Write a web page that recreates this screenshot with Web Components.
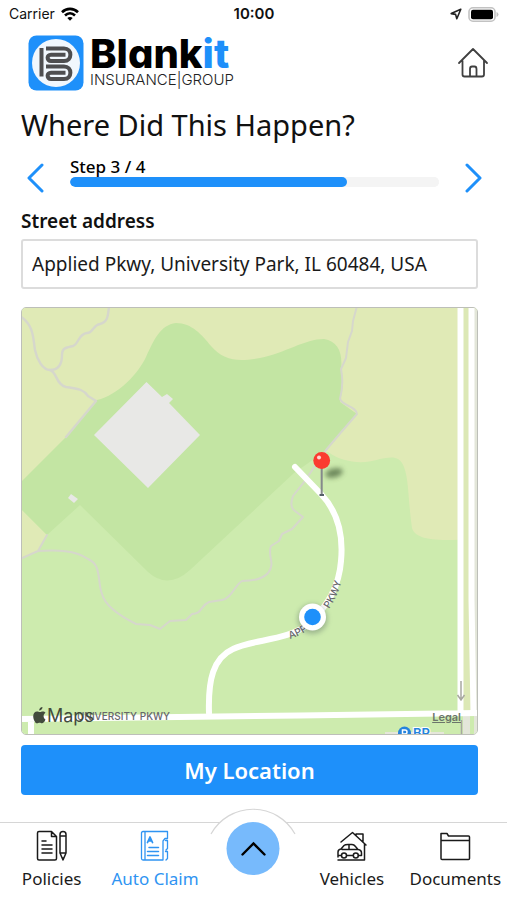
<!DOCTYPE html>
<html lang="en">
<head>
<meta charset="utf-8">
<meta name="viewport" content="width=device-width, initial-scale=1">
<title>Where Did This Happen?</title>
<style>
  html, body { margin: 0; }
  body {
    --blue: #1e90fa;
    --line: #d2d2d2;
    --ink: #111;
    font-family: "Noto Sans", "Open Sans", sans-serif;
    color: var(--ink);
    background: #fff;
  }
</style>
</head>
<body>
<claim-app></claim-app>
<script>
const define = (name, html, setup) => {
  const tpl = document.createElement('template');
  tpl.innerHTML = '<style>*{box-sizing:border-box}svg{display:block}</style>' + html;
  customElements.define(name, class extends HTMLElement {
    constructor() {
      super();
      this.attachShadow({ mode: 'open' }).append(tpl.content.cloneNode(true));
    }
    connectedCallback() { if (setup) setup(this, this.shadowRoot); }
  });
};

define('status-bar', `
<style>
  :host { display: grid; grid-template-columns: 1fr auto 1fr; align-items: center; height: 28px; padding: 0 8px 0 9px;
    font: 14px/20px Inter, "Liberation Sans", sans-serif; }
  .side { display: flex; align-items: center; gap: 6px; }
  .end { justify-content: flex-end; }
  .time { font-size: 15px; font-weight: 600; }
</style>
<div class="side"><span>Carrier</span>
  <svg width="18" height="14" viewBox="0 0 18 14" fill="none" stroke="#000" stroke-width="2.6" aria-label="Wi-Fi">
    <path d="M1 5.2C5.500 .8 12.500 .8 17 5.200M4 8.500C7 5.600 11 5.600 14 8.500"/><path d="M9 13.800 6.300 11C7.800 9.700 10.200 9.700 11.700 11Z" fill="#000" stroke="none"/>
  </svg></div>
<span class="time">10:00</span>
<div class="side end">
  <svg width="12" height="12" viewBox="0 0 12 12" fill="none" stroke="#222" stroke-width="1.600" stroke-linejoin="round" aria-label="Location"><path d="M10.800 1.200 1.200 5.600 5.600 6.400 6.800 10.800Z"/></svg>
  <svg width="31" height="15" viewBox="0 0 31 15" aria-label="Battery"><rect x="1" y=".8" width="26" height="13.400" rx="4" fill="#fff" stroke="#c2c2c2" stroke-width="1.600"/><rect x="3" y="2.800" width="22" height="9.400" rx="2"/><path d="M28.500 5v5q2-.8 2-2.500T28.500 5Z" fill="#c2c2c2"/></svg>
</div>`);

define('brand-logo', `
<style>
  :host { display: flex; align-items: center; gap: 6px; }
  .words { display: flex; flex-direction: column; }
  .name { font: 800 40px/34px Inter, sans-serif; font-feature-settings: "cv11"; color: #000; }
  .name b { font-weight: inherit; color: var(--blue); }
  .sub { font: 300 15px/18px Inter, sans-serif; color: #222; white-space: nowrap; }
</style>
<svg width="56" height="56" viewBox="0 0 56 56" aria-hidden="true">
  <rect x=".5" y=".5" width="55" height="55" rx="8" fill="#1e90fa"/>
  <circle cx="28" cy="28" r="24" fill="#f1f7fd"/>
  <g fill="none" stroke="#4e4e50" stroke-width="4">
    <path d="M13.500 13V41.500"/>
    <path d="M18 13.500H36C44.500 13.500 44.500 26 36 26H23C18.500 26 18.500 19.700 23 19.700H37.500"/>
    <path d="M18 31.500H36C44.500 31.500 44.500 44 36 44H23C18.500 44 18.500 37.700 23 37.700H37.500"/>
  </g>
</svg>
<div class="words"><span class="name">Blank<b>it</b></span><span class="sub">INSURANCE|GROUP</span></div>`);

define('app-header', `
<style>
  :host { display: flex; justify-content: space-between; align-items: center; padding: 7px 18px 0 28px; }
  button { border: 0; background: none; padding: 0; }
</style>
<brand-logo></brand-logo>
<button type="button" aria-label="Home"><svg width="32" height="32" viewBox="0 0 32 32" fill="none" stroke="#404040" stroke-width="1.800" stroke-linejoin="round" stroke-linecap="round"><path d="M2 16 16 2 30 16M5.500 13.500V27.500Q5.500 29.500 7.500 29.500H25Q27 29.500 27 27.500V13.500M13 29V22Q13 19.500 15 19.500H17.500Q19.500 19.500 19.500 22V29"/></svg></button>`);

define('step-progress', `
<style>
  :host { display: flex; align-items: center; gap: 24px; padding-left: 5px; }
  .mid { flex: 1; min-width: 0; display: flex; flex-direction: column; }
  label { font-size: 17px; line-height: 20px; font-weight: 500; color: #000; }
  progress { appearance: none; display: block; width: 100%; height: 10px; border: 0; border-radius: 5px; background: #f4f4f4; overflow: hidden; }
  progress::-webkit-progress-bar { background: #f4f4f4; border-radius: 5px; }
  progress::-webkit-progress-value { background: var(--blue); border-radius: 5px; }
  progress::-moz-progress-bar { background: var(--blue); border-radius: 5px; }
  button { border: 0; background: none; padding: 0; margin-top: 12px; }
  .next { margin-right: -5px; }
</style>
<button type="button" aria-label="Previous step"><svg width="20" height="30" viewBox="0 0 20 30" fill="none" stroke="#1e90fa" stroke-width="3" stroke-linecap="round" stroke-linejoin="round"><path d="M16 2 3 15 16 28"/></svg></button>
<div class="mid"><label for="p"></label><progress id="p"></progress></div>
<button class="next" type="button" aria-label="Next step"><svg width="20" height="30" viewBox="0 0 20 30" fill="none" stroke="#1e90fa" stroke-width="3" stroke-linecap="round" stroke-linejoin="round"><path d="M4 2 17 15 4 28"/></svg></button>`,
(el, root) => {
  const step = el.getAttribute('step'), total = el.getAttribute('total');
  root.querySelector('label').textContent = 'Step ' + step + ' / ' + total;
  root.querySelector('progress').max = total;
  root.querySelector('progress').value = step;
});

define('text-field', `
<style>
  :host { display: flex; flex-direction: column; gap: 4px; }
  label { font-size: 19px; line-height: 28px; font-weight: 600; color: #111; }
  input { width: 100%; height: 50px; padding: 0 9px; border: 2px solid #dcdcdc; border-radius: 3px; font: inherit; font-size: 19px; color: #1a1a1a; background: #fff; outline: 0; }
</style>
<label for="f"></label><input id="f" type="text">`,
(el, root) => {
  root.querySelector('label').textContent = el.getAttribute('label');
  root.querySelector('input').value = el.getAttribute('value');
});

define('location-map', `
<style>
  :host { display: block; position: relative; aspect-ratio: 457 / 428; border: 1px solid #bdbfb9; border-radius: 5px; overflow: hidden; }
  svg { width: 100%; height: 100%; }
  a { position: absolute; right: 16px; bottom: 10px; font: 600 11px/14px Inter, sans-serif; color: #6b756a; text-decoration: underline; }
  .road { font: 500 10px Inter, sans-serif; fill: #66666b; }
</style>
<svg viewBox="22 308 455 426" preserveAspectRatio="xMidYMid slice" role="img" aria-label="Map of Applied Pkwy">
  <defs>
    <filter id="soft" x="-60%" y="-100%" width="220%" height="300%"><feGaussianBlur stdDeviation="2.500"/></filter>
    <path id="pkwy" d="M290 639C326 627 346 590 345 552"/>
  </defs>
  <rect x="20" y="306" width="460" height="430" fill="#cdebae"/>
  <path fill="#e0eab6" d="M20 306H470V539C430 542 415 538 412 528C408 500 409 480 404 467C400 455 390 457 380 459C365 464 345 464 328 452L20 484ZM20 508 47 535 38 551 20 558Z"/>
  <path fill="#c3e5a3" d="M20 483 66 437 97 400C118 395 138 374 146 357C154 340 160 325 176 323C192 323 202 335 211 346C224 361 238 362 260 358C285 353 305 339 324 339C338 341 343 353 341 370L343 385 340 402 357 414 327 450 294 473 190 570Q168 590 148 572L80 505 47 535 20 508Z"/>
  <g fill="#e8e8e6"><path d="M146.500 382 162 397 167 394 173 399 169 403 200 435 148 488 94 435Z"/><path d="M71 494 78 499 74 503 68 498Z"/></g>
  <g fill="none" stroke="#d6d7cc" stroke-width="2.400" stroke-linejoin="round" stroke-linecap="round">
    <path d="M20 316C34 325 33 338 35 350C37 360 43 370 50 370C57 372 56 385 66 387C80 389 84 390 88 396L96 401 66 437"/>
    <path d="M109 306C108 318 107 322 100 324C93 325 93 333 87 333C78 334 79 344 73 346C65 348 62 348 62 355C62 365 58 370 50 370"/>
    <path stroke-width="2" d="M357 306 353 321 352 331 348 342 346 358 341 369Q344 384 340 399C344 407 356 406 357 414Q342 431 326 450L304 482 293 496Q289 507 295 511L303 517 292 529 282 534 279 541 271 546C267 556 276 563 268 573C262 580 250 581 242 581C235 585 231 599 222 600L209 602C200 606 202 614 192 614L186 620 170 621 160 629 150 625 136 624C122 617 105 606 102 594C97 581 102 565 88 559C75 550 57 550 38 551L20 559M38 551 47 535"/>
  </g>
  <path fill="none" stroke="#dce8b5" stroke-width="18" d="M468 306V712"/>
  <path fill="#e3e6d9" d="M474 306H478V736H474ZM463 716H470V736H463Z"/>
  <g fill="none" stroke="#fff" stroke-width="6">
    <path d="M460.500 306V714M471.500 306V600L473.500 714M20 719C120 718 330 715 477 713M31 719V736"/>
    <path stroke-linecap="round" d="M295 467 321 494C340 514 343 540 341 561C339 589 324 610 308 624C288 641 253 639 233 649C213 658 208 680 209 713"/>
  </g>
  <path fill="none" stroke="#a7a7a0" stroke-width="1.500" d="M461 681V699M457.500 695 461 700 464.500 695M461.500 720V736"/>
  <text class="road" x="170" y="720" text-anchor="end">UNIVERSITY PKWY</text>
  <text class="road"><textPath href="#pkwy">APPLIED</textPath></text>
  <text class="road"><textPath href="#pkwy" startOffset="50">PKWY</textPath></text>
  <g fill="#424b3c">
    <path d="M42.500 707C42.500 709 41 710.500 39.200 710.500C39 708.600 40.700 707 42.500 707ZM45.500 719.500C44.500 722 43.200 723.300 42 723.300C41 723.300 40.700 722.700 39.600 722.700C38.500 722.700 38.100 723.300 37.100 723.300C35 723.300 33.200 719 33.200 716.200C33.200 713.200 35 711.400 37 711.400C38.200 711.400 38.900 712.100 39.900 712.100C40.900 712.100 41.500 711.400 42.900 711.400C43.900 711.400 44.900 711.900 45.500 712.800C42.800 714.400 43.200 718.300 45.500 719.500Z"/>
    <text x="47" y="722" font-family="Inter, sans-serif" font-size="18">Maps</text>
  </g>
  <path fill="#e5e6da" d="M385 732H444V736H385Z"/>
  <circle cx="404.500" cy="733" r="6.500" fill="#2583dd"/>
  <path fill="none" stroke="#fff" stroke-width="1.500" d="M402.500 737V730H405Q407 730 407 732T405 734H402.500"/>
  <text x="413" y="738" font-family="Inter, sans-serif" font-size="13" font-weight="600" fill="#2583dd" stroke="#fff" stroke-width="2" paint-order="stroke">BP</text>
  <circle cx="312.500" cy="619" r="15" fill="#455" opacity=".35" filter="url(#soft)"/>
  <circle cx="312.500" cy="617" r="13.500" fill="#fff"/><circle cx="312.500" cy="617" r="8.300" fill="#1e90fa"/>
  <ellipse cx="334" cy="473" rx="9" ry="4.500" fill="#46603a" opacity=".7" filter="url(#soft)" transform="rotate(-14 334 473)"/>
  <path stroke="#85898b" stroke-width="2" d="M321.700 468V495"/><path stroke="#566069" stroke-width="2" d="M319.500 495H324"/>
  <circle cx="321.700" cy="460.500" r="8.400" fill="#fb3b30"/><circle cx="319" cy="457.500" r="2" fill="#ffd5d0"/>
</svg>
<a href="#legal">Legal</a>`);

define('primary-button', `
<style>
  :host { display: block; }
  button { width: 100%; height: 50px; border: 0; border-radius: 4px; background: var(--blue); color: #fff; font: inherit; font-size: 22px; font-weight: 600; }
</style>
<button type="button"><slot></slot></button>`);

define('tab-item', `
<style>
  :host { display: block; }
  a { display: flex; flex-direction: column; align-items: center; gap: 5px; color: #1a1a1a; font-size: 17px; line-height: 24px; text-decoration: none; white-space: nowrap; }
  :host([active]) a { color: #2f94f2; }
  ::slotted(svg) { display: block; fill: none; stroke: currentColor; stroke-width: 1.500; stroke-linejoin: round; stroke-linecap: round; }
</style>
<a><slot name="icon"></slot><slot></slot></a>`,
(el, root) => { root.querySelector('a').href = el.getAttribute('to'); });

define('tab-bar', `
<style>
  :host { display: grid; grid-template-columns: 21fr 21fr 19fr 21fr 21fr; border-top: 1px solid #d6d6d6; padding: 7px 0 8px; height: 78px; }
  .center { position: relative; }
  .center svg { position: absolute; left: 50%; top: -22px; transform: translateX(-50%); }
  button { position: absolute; left: 50%; top: -8px; transform: translateX(-50%); width: 53px; height: 53px; border: 0; border-radius: 50%; padding: 0; background: #77bafc; display: grid; place-items: center; }
  .center button svg { position: static; transform: none; }
</style>
<tab-item to="#policies">
  <svg slot="icon" width="32" height="32" viewBox="0 0 32 32"><path d="M15.500 1.500H3Q1.500 1.500 1.500 3V28.500Q1.500 30 3 30H19Q20.500 30 20.500 28.500V6.500ZM15.500 1.500V6.500H20.500M6 11H10M6 15H16M6 19H16M6 23H16M24 4.500Q24 1.500 27 1.500T30 4.500V23L27 30 24 23ZM24 6H30M24 23H30M26.200 28H27.800"/></svg>Policies</tab-item>
<tab-item to="#claim" active>
  <svg slot="icon" width="32" height="32" viewBox="0 0 32 32"><path stroke-width="1.300" d="M28.500 8V1.500H4Q2.500 1.500 2.500 3V28.500Q2.500 30 4 30H24V11L26 8.500H28.500ZM6 2V29.500M26.500 10.500H28.500V18.500L27 20M26.500 21.500H28.500V28.500L27 30"/><path d="M10 17.500H19.500M8.500 21.500H19.500M8.500 25.500H19.500"/><path stroke-width="1.800" d="M8.500 12.500 11 7 13.500 12.500M9.500 10.800H12.500"/></svg>Auto Claim</tab-item>
<div class="center">
  <svg width="88" height="28" viewBox="0 0 88 28" aria-hidden="true"><path d="M2 26A48 48 0 0 1 86 26" fill="#fff" stroke="#d6d6d6" stroke-width="1.200"/></svg>
  <button type="button" aria-label="Open menu"><svg width="28" height="18" viewBox="0 0 28 18" fill="none" stroke="#000" stroke-width="2.400" stroke-linecap="round" stroke-linejoin="miter"><path d="M3 14.500 14 3.500 25 14.500"/></svg></button>
</div>
<tab-item to="#vehicles">
  <svg slot="icon" width="32" height="32" viewBox="0 0 32 32"><path d="M5 12 16.500 2.500 30 15M20 5.500V4H27V11.500M28.500 14V30H2M2 27V22Q2 19.500 5 19L8 15.500Q9 14.500 12 14.500H16Q18 14.500 19.500 16.500L22 19.500Q25.500 20 25.500 23V25.500H22.500M6 19.500H21M13 14.500V19.500M11 25.500H17M2 25.500H5"/><circle cx="8" cy="25.500" r="2.500"/><circle cx="19.800" cy="25.500" r="2.500"/></svg>Vehicles</tab-item>
<tab-item to="#documents">
  <svg slot="icon" width="32" height="32" viewBox="0 0 32 32"><path d="M2 3.500H8L9.500 6H29.500Q30.500 6 30.500 7V28.500Q30.500 29.500 29.500 29.500H3Q2 29.500 2 28.500ZM2 10.500H30.500"/></svg>Documents</tab-item>`);

define('claim-app', `
<style>
  :host { display: flex; flex-direction: column; min-height: 100vh; }
  main { display: flex; flex-direction: column; padding: 14px 29px 0 21px; }
  h1 { margin: 0 0 6px; font-size: 29px; line-height: 40px; font-weight: 400; }
  text-field { margin: 14px 0 18px; }
  location-map { margin-bottom: 10px; }
  tab-bar { margin-top: auto; }
</style>
<status-bar></status-bar>
<app-header></app-header>
<main>
  <h1>Where Did This Happen?</h1>
  <step-progress step="3" total="4"></step-progress>
  <text-field label="Street address" value="Applied Pkwy, University Park, IL 60484, USA"></text-field>
  <location-map></location-map>
  <primary-button>My Location</primary-button>
</main>
<tab-bar></tab-bar>`);
</script>
</body>
</html>
